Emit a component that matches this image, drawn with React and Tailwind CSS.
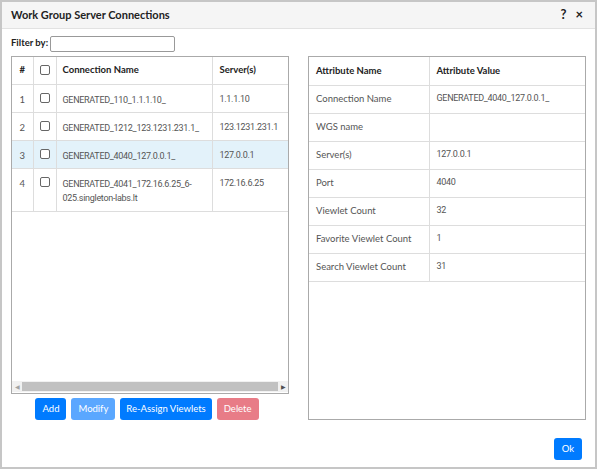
import React from "react";

const rows = [
  { n: 1, name: "GENERATED_110_1.1.1.10_", server: "1.1.1.10" },
  { n: 2, name: "GENERATED_1212_123.1231.231.1_", server: "123.1231.231.1" },
  { n: 3, name: "GENERATED_4040_127.0.0.1_", server: "127.0.0.1", sel: true },
  { n: 4, name: "GENERATED_4041_172.16.6.25_6-025.singleton-labs.lt", server: "172.16.6.25", tall: true },
];

const attrs = [
  ["Connection Name", "GENERATED_4040_127.0.0.1_"],
  ["WGS name", ""],
  ["Server(s)", "127.0.0.1"],
  ["Port", "4040"],
  ["Viewlet Count", "32"],
  ["Favorite Viewlet Count", "1"],
  ["Search Viewlet Count", "31"],
];

const mono = { fontFamily: 'Roboto, "Open Sans", sans-serif' };

function Box() {
  return <span className="block w-[10px] h-[10px] border border-[#666] rounded-[2px] bg-white" />;
}

export default function App() {
  return (
    <div className="w-[597px] h-[469px] bg-white border-2 border-[#c6c6c6] flex flex-col text-[#333] text-[9.5px]" style={{ fontFamily: 'Lato, "Open Sans", sans-serif' }}>
      <div className="h-[27px] shrink-0 bg-[#f5f5f5] border-b border-[#e2e2e2] flex items-center justify-between pl-[9px] pr-[12px]">
        <span className="font-bold text-[11px] text-[#222]">Work Group Server Connections</span>
        <span className="flex items-center gap-[9px] font-bold text-[#222]">
          <span className="text-[13px]">?</span>
          <span className="text-[13px]">×</span>
        </span>
      </div>
      <div className="flex-1 flex flex-col px-[9px] pt-[6px]">
        <div className="flex items-center h-[17px] gap-[2px]">
          <span className="font-bold text-[9.5px] text-[#222]">Filter by:</span>
          <span className="w-[125px] h-[16px] border border-[#999] rounded-[2px] bg-white" />
        </div>
        <div className="flex gap-[19px] mt-[4px]">
          <div className="flex flex-col w-[278px]">
            <div className="h-[338px] border border-[#aaa] flex flex-col overflow-hidden">
              <div className="flex-1 overflow-hidden">
                <table className="border-collapse w-[290px] table-fixed">
                  <colgroup>
                    <col className="w-[21px]" />
                    <col className="w-[23px]" />
                    <col className="w-[156px]" />
                    <col className="w-[90px]" />
                  </colgroup>
                  <thead>
                    <tr className="h-[27px] font-bold text-[#222]">
                      <td className="border-r border-b border-[#ddd] text-center">#</td>
                      <td className="border-r border-b border-[#ddd]"><div className="flex justify-center"><Box /></div></td>
                      <td className="border-r border-b border-[#ddd] pl-[6px]">Connection Name</td>
                      <td className="border-b border-[#ddd] pl-[7px]">Server(s)</td>
                    </tr>
                  </thead>
                  <tbody>
                    {rows.map((r) => (
                      <tr key={r.n} className={`${r.tall ? "h-[43px]" : "h-[28px]"} ${r.sel ? "bg-[#e3f2fa]" : ""} text-[#555]`}>
                        <td className="border-r border-b border-[#ddd] text-center align-top pt-[8px]">{r.n}</td>
                        <td className="border-r border-b border-[#ddd] align-top pt-[8px]"><div className="flex justify-center"><Box /></div></td>
                        <td className="border-r border-b border-[#ddd] pl-[6px] pr-[4px] align-top pt-[8px] leading-[14px] text-[9px] tracking-[-0.3px]" style={mono}>{r.name}</td>
                        <td className="border-b border-[#ddd] pl-[7px] align-top pt-[8px] whitespace-nowrap text-[9px] tracking-[-0.3px]" style={mono}>{r.server}</td>
                      </tr>
                    ))}
                  </tbody>
                </table>
              </div>
              <div className="h-[11px] bg-[#f1f1f1] flex items-center shrink-0 mb-[1px]">
                <span className="w-[10px] flex justify-center text-[#a3a3a3] text-[6px]">◀</span>
                <span className="flex-1 h-[9px] bg-[#c1c1c1]" />
                <span className="w-[10px] flex justify-center text-[#505050] text-[6px]">▶</span>
              </div>
            </div>
            <div className="flex justify-center gap-[5px] mt-[4px] pr-[6px]">
              <button className="h-[22px] px-[7px] rounded-[3px] bg-[#007bff] text-white text-[9.5px]">Add</button>
              <button className="h-[22px] px-[7px] rounded-[3px] bg-[#5aa7ff] text-white text-[9.5px]">Modify</button>
              <button className="h-[22px] px-[6px] rounded-[3px] bg-[#007bff] text-white text-[9.5px]">Re-Assign Viewlets</button>
              <button className="h-[22px] px-[7px] rounded-[3px] bg-[#e87c87] text-white text-[9.5px]">Delete</button>
            </div>
          </div>
          <div className="w-[279px] h-[364px] border border-[#aaa]">
            <table className="border-collapse w-full table-fixed">
              <colgroup>
                <col className="w-[120px]" />
                <col />
              </colgroup>
              <thead>
                <tr className="h-[28px] font-bold text-[#222]">
                  <td className="border-r border-b border-[#ddd] pl-[7px]">Attribute Name</td>
                  <td className="border-b border-[#ddd] pl-[7px]">Attribute Value</td>
                </tr>
              </thead>
              <tbody>
                {attrs.map(([k, v]) => (
                  <tr key={k} className="h-[28px] text-[#555]">
                    <td className="border-r border-b border-[#ddd] pl-[7px]">{k}</td>
                    <td className="border-b border-[#ddd] pl-[7px] whitespace-nowrap text-[9px] tracking-[-0.3px]" style={mono}>{v}</td>
                  </tr>
                ))}
              </tbody>
            </table>
          </div>
        </div>
        <div className="flex justify-end mt-[18px] pr-[4px]">
          <button className="h-[22px] w-[28px] rounded-[3px] bg-[#007bff] text-white text-[9.5px]">Ok</button>
        </div>
      </div>
    </div>
  );
}
